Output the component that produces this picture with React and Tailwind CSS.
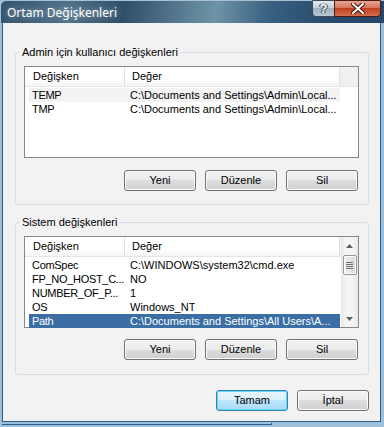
import React from "react";

const F = { fontFamily: '"Liberation Sans", Arial, sans-serif' };

function Btn({ children, def }) {
  return (
    <div
      className={
        "h-[21px] w-[72px] flex items-center justify-center rounded-[3px] border text-[11px] text-black " +
        (def
          ? "border-[#3c7fb1] shadow-[inset_0_0_0_1px_#5fd9fb] bg-[linear-gradient(#eaf6fd_0%,#d9f0fc_50%,#bee6fd_50%,#a7d9f5_100%)]"
          : "border-[#707070] shadow-[inset_0_0_0_1px_#fcfcfc] bg-[linear-gradient(#f2f2f2_0%,#ebebeb_50%,#dddddd_50%,#cfcfcf_100%)]")
      }
    >
      {children}
    </div>
  );
}

function Buttons() {
  return (
    <div className="flex justify-end gap-[9px] mr-[10px]">
      <Btn>Yeni</Btn>
      <Btn>Düzenle</Btn>
      <Btn>Sil</Btn>
    </div>
  );
}

function Header() {
  return (
    <div className="flex h-[20px] border-b border-[#e5e5e5] text-[11px]">
      <div className="w-[100px] h-full flex items-center pl-[8px] border-r border-[#e0e0e0] bg-[linear-gradient(#ffffff_0%,#ffffff_60%,#f4f5f6_100%)]">
        Değişken
      </div>
      <div className="w-[215px] h-full flex items-center pl-[7px] border-r border-[#e0e0e0] bg-[linear-gradient(#ffffff_0%,#ffffff_60%,#f4f5f6_100%)]">
        Değer
      </div>
      <div className="flex-1 h-full bg-[#f0f0f0]" />
    </div>
  );
}

function Row({ a, b, sel, hov }) {
  return (
    <div
      className={
        "ml-[4px] w-[311px] h-[14px] flex items-center text-[11px] whitespace-nowrap " +
        (sel ? "bg-[#3a6ea5] text-white" : hov ? "bg-[#f3f3f3] text-black" : "text-black")
      }
    >
      <div className="w-[95px] shrink-0 pl-[3px] tracking-[-0.3px]">{a}</div>
      <div className="pl-[6px] overflow-hidden">{b}</div>
    </div>
  );
}

function Scrollbar() {
  return (
    <div className="absolute right-0 top-0 bottom-0 w-[17px] bg-[linear-gradient(90deg,#e8e8e8,#f4f4f4_30%,#f4f4f4_70%,#e8e8e8)] flex flex-col items-center">
      <div className="h-[17px] w-full flex items-center justify-center">
        <svg width="7" height="4" viewBox="0 0 7 4"><path d="M3.5 0 L7 4 L0 4 Z" fill="#606060" /></svg>
      </div>
      <div className="mt-[1px] h-[20px] w-[14px] rounded-[2px] border border-[#979797] bg-[linear-gradient(90deg,#f3f3f3,#e6e6e6_50%,#d6d6d6)] shadow-[inset_0_0_0_1px_#ffffff] flex flex-col items-center justify-center gap-[1px]">
        <div className="h-[1px] w-[7px] bg-[#707070]" />
        <div className="h-[1px] w-[7px] bg-[#707070]" />
        <div className="h-[1px] w-[7px] bg-[#707070]" />
        <div className="h-[1px] w-[7px] bg-[#707070]" />
      </div>
      <div className="flex-1" />
      <div className="h-[17px] w-full flex items-center justify-center">
        <svg width="7" height="4" viewBox="0 0 7 4"><path d="M0 0 L7 0 L3.5 4 Z" fill="#606060" /></svg>
      </div>
    </div>
  );
}

function Group({ title, children, className }) {
  return (
    <fieldset className={"border border-[#d5dfe5] rounded-[3px] ml-[12px] mr-[11px] " + (className || "")}>
      <legend className="ml-[4px] px-[2px] text-[11px] leading-[13px] text-black">{title}</legend>
      {children}
    </fieldset>
  );
}

export default function App() {
  return (
    <div style={F} className="w-[384px] h-[427px] flex flex-col overflow-hidden bg-[#9fc0da] relative">
      {/* Title bar */}
      <div className="h-[23px] shrink-0 relative bg-[linear-gradient(100deg,#34536e_0%,#4f7189_18%,#2f4e68_32%,#5f8399_50%,#6f93a6_56%,#386080_70%,#284b6c_85%,#24466a_100%)] rounded-tl-[6px] border-t border-l border-[#a9c0d2]">
        <div
          className="absolute left-[6px] top-[3px] text-[12px] text-white [text-shadow:0_0_6px_rgba(255,255,255,0.5)]"
          style={{ fontFamily: '"Noto Sans", "Open Sans", sans-serif' }}
        >
          Ortam Değişkenleri
        </div>
        <div className="absolute top-[-1px] left-[311px] h-[17px] w-[23px] rounded-bl-[4px] border border-[#3a4c5c] bg-[linear-gradient(#dfe7ee_0%,#c5d2dc_45%,#9fb3c2_50%,#b9c9d5_100%)] flex items-center justify-center">
          <span className="text-[13px] font-bold text-white leading-none [text-shadow:0_0_1px_#203040,1px_0_1px_#203040,-1px_0_1px_#203040]">?</span>
        </div>
        <div className="absolute top-[-1px] left-[333px] h-[17px] w-[47px] rounded-br-[4px] border border-[#4a1a12] bg-[linear-gradient(#e8a493_0%,#d7755d_45%,#c2401f_50%,#d56e4c_100%)] flex items-center justify-center">
          <svg width="14" height="11" viewBox="0 0 14 11">
            <path d="M2 1 L12 10 M12 1 L2 10" stroke="#40160e" strokeWidth="4" strokeLinecap="square" />
            <path d="M2 1 L12 10 M12 1 L2 10" stroke="#ffffff" strokeWidth="2" strokeLinecap="square" />
          </svg>
        </div>
      </div>
      {/* Client */}
      <div className="ml-[2px] mr-[3px] h-[399px] shrink-0 bg-[#f2f2f2] border-l border-r border-b border-[#2c5a86] flex flex-col pt-[23px]">
        <Group title="Admin için kullanıcı değişkenleri" className="pb-[13px]">
          <div className="mt-[7px] ml-[8px] mr-[9px] h-[92px] border border-[#828790] bg-white relative">
            <Header />
            <div className="pt-[1px]">
              <Row a="TEMP" b="C:\Documents and Settings\Admin\Local..." hov />
              <Row a="TMP" b="C:\Documents and Settings\Admin\Local..." />
            </div>
          </div>
          <div className="mt-[12px]">
            <Buttons />
          </div>
        </Group>
        <Group title="Sistem değişkenleri" className="mt-[11px] pb-[14px]">
          <div className="mt-[7px] ml-[8px] mr-[9px] h-[92px] border border-[#828790] bg-white relative">
            <Header />
            <div className="pt-[1px]">
              <Row a="ComSpec" b="C:\WINDOWS\system32\cmd.exe" />
              <Row a="FP_NO_HOST_C..." b="NO" />
              <Row a="NUMBER_OF_P..." b="1" />
              <Row a="OS" b="Windows_NT" />
              <Row a="Path" b="C:\Documents and Settings\All Users\A..." sel />
            </div>
            <Scrollbar />
          </div>
          <div className="mt-[11px]">
            <Buttons />
          </div>
        </Group>
        <div className="mt-[15px] flex justify-end gap-[9px] mr-[11px]">
          <Btn def>Tamam</Btn>
          <Btn>İptal</Btn>
        </div>
      </div>
      <div className="ml-[2px] w-[270px] h-[2px] mt-[1px] border-b border-r border-[#2c5a86]" />
    </div>
  );
}
